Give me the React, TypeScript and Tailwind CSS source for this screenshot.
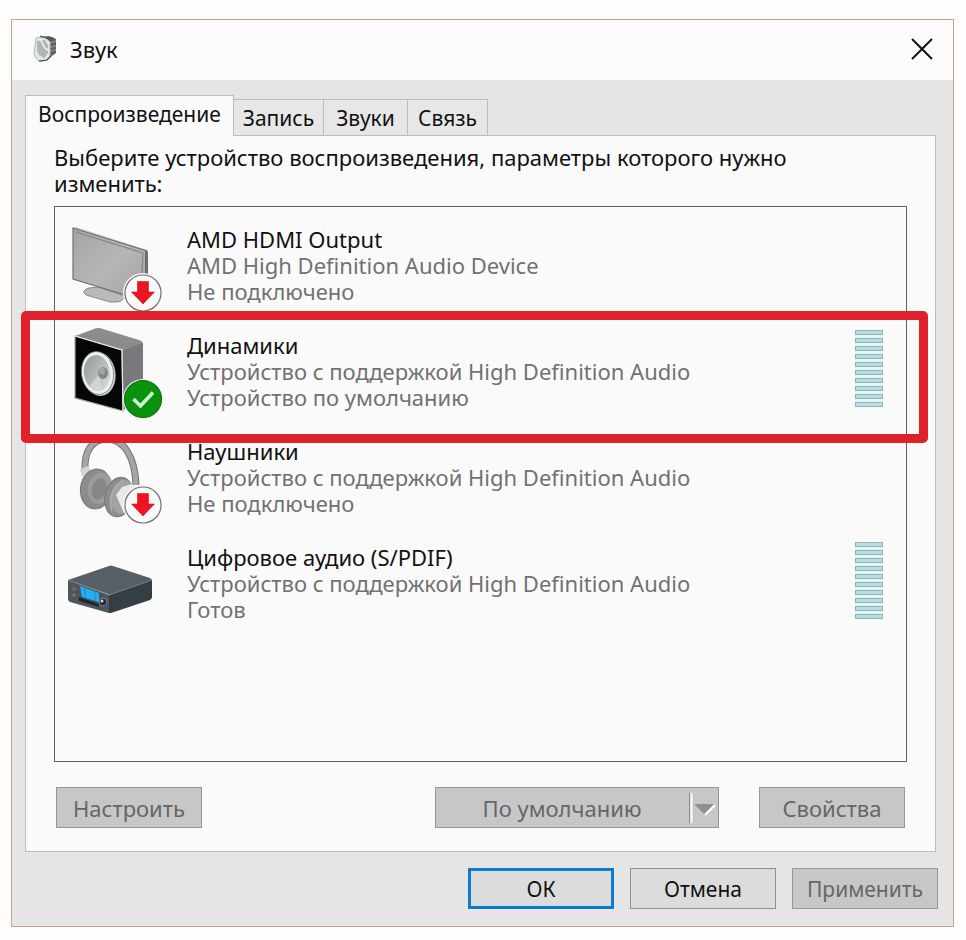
import React, { useState } from 'react';

interface Device {
  id: string;
  name: string;
  driver: string;
  status: string;
  icon: () => React.ReactElement;
  hasMeter?: boolean;
  highlighted?: boolean;
}

const tabs = [
  { label: 'Запись', width: 'w-[90px]' },
  { label: 'Звуки', width: 'w-[84px]' },
  { label: 'Связь', width: 'w-[80px]' },
];

function UnpluggedBadge() {
  return (
    <>
      <circle cx="78" cy="74" r="20" fill="#fbfafa" />
      <circle cx="78" cy="74" r="18" fill="#fbfafa" stroke="#6f6f6f" strokeWidth="1.2" />
      <path d="M72.500 62.500h11v10.500h6L78 85 66.500 73h6z" fill="#ee1420" stroke="#c9182a" strokeWidth="0.600" />
    </>
  );
}

function MonitorIcon() {
  return (
    <svg viewBox="0 0 100 92" className="h-[92px] w-[100px] shrink-0 overflow-visible" aria-hidden="true">
      <defs>
        <linearGradient id="screen" x1="0" y1="0" x2="1" y2="1">
          <stop offset="0" stopColor="#a4a4a4" />
          <stop offset="0.5" stopColor="#b6b6b6" />
          <stop offset="1" stopColor="#a3a3a3" />
        </linearGradient>
      </defs>
      <path d="M36 66l19 6v9l-17-4z" fill="#a0a0a0" />
      <path d="M19 72q1-2 5-3l9-1 27 9q-2 6-9 6h-6l-24-7q-3-2-2-4z" fill="#b9b9b9" stroke="#8a8a8a" strokeWidth="1" />
      <path d="M8 9l3-1 71 23-2 4z" fill="#c9c9c9" />
      <path d="M8 9l74 23-2 50L8 60z" fill="url(#screen)" stroke="#727272" strokeWidth="1.2" />
      <path d="M11 13l67 21-2 42" fill="none" stroke="#858585" strokeWidth="1.200" />
      <path d="M80 32l3 1v29l-3-2z" fill="#6c6c6c" />
      <UnpluggedBadge />
    </svg>
  );
}

function SpeakerIcon() {
  return (
    <svg viewBox="0 0 100 92" className="h-[92px] w-[100px] shrink-0 overflow-visible" aria-hidden="true">
      <defs>
        <linearGradient id="cone" x1="0" y1="0" x2="1" y2="1">
          <stop offset="0" stopColor="#8f9696" />
          <stop offset="0.6" stopColor="#b9c0c0" />
          <stop offset="1" stopColor="#e0e4e4" />
        </linearGradient>
      </defs>
      <path d="M10 11L29 4q4-2 9 0l36 11q4 1 4 4L57 25z" fill="#8b8c8e" />
      <path d="M57 25l21-7v46L58 86z" fill="#77797c" />
      <path d="M10 11l47 14 1 61-48-13z" fill="#060606" stroke="#a9a9a9" strokeWidth="1.2" />
      <path d="M10 11l47 14 1 61" fill="none" stroke="#e8e8e8" strokeWidth="1.2" />
      <ellipse cx="34" cy="49" rx="16.500" ry="22" fill="#c9cdcd" transform="rotate(-8 34 49)" />
      <ellipse cx="32.500" cy="48" rx="16" ry="21.500" fill="#edf0f0" stroke="#6f7373" strokeWidth="0.700" transform="rotate(-8 32.500 48)" />
      <ellipse cx="32" cy="48" rx="13" ry="18" fill="url(#cone)" transform="rotate(-8 32 48)" />
      <path d="M35 48L24 62q5 5 12 2z" fill="#d9dddd" opacity="0.700" />
      <ellipse cx="38" cy="48" rx="5" ry="6" fill="#898686" />
      <ellipse cx="37" cy="46" rx="3" ry="3.500" fill="#aaa5a5" />
      <circle cx="78" cy="74" r="20" fill="#f6faf6" />
      <circle cx="78" cy="74" r="18.500" fill="#0a920f" stroke="#08720c" strokeWidth="1.200" />
      <path d="M68.500 74l7 7L88 67.500" fill="none" stroke="#c9f7cf" strokeWidth="3.600" />
    </svg>
  );
}

function HeadphonesIcon() {
  return (
    <svg viewBox="0 0 100 92" className="h-[92px] w-[100px] shrink-0 overflow-visible" aria-hidden="true">
      <path d="M20 40C19 20 27 8 42 8c17 0 28 18 29 46" fill="none" stroke="#747474" strokeWidth="7" />
      <path d="M20 40C19 20 27 8 42 8c17 0 28 18 29 46" fill="none" stroke="#a5a5a5" strokeWidth="5" />
      <path d="M15 38l8-3 4 5-10 6z" fill="#d5d5d5" />
      <ellipse cx="31" cy="58" rx="15.500" ry="20" fill="#8c8c8c" stroke="#747474" transform="rotate(8 31 58)" />
      <ellipse cx="35" cy="57" rx="12" ry="16" fill="#9b9b9b" transform="rotate(14 35 57)" />
      <ellipse cx="34" cy="58" rx="7" ry="11" fill="#868686" transform="rotate(18 34 58)" />
      <ellipse cx="54" cy="66" rx="14" ry="20" fill="#8c8c8c" stroke="#777" transform="rotate(12 54 66)" />
      <ellipse cx="58" cy="66" rx="12" ry="17" fill="#a2a2a2" transform="rotate(12 58 66)" />
      <path d="M47 80q-6-19 11-31" fill="none" stroke="#b0b0b0" strokeWidth="1.500" />
      <path d="M51 64l6-8 10-3 4 3-12 26-5-11z" fill="#e9e9e9" />
      <UnpluggedBadge />
    </svg>
  );
}

function DigitalIcon() {
  return (
    <svg viewBox="0 0 100 92" className="h-[92px] w-[100px] shrink-0" aria-hidden="true">
      <path d="M3 43l41-14q2-1 4 0l37 12q2 1 2 3L46 58z" fill="#566066" />
      <path d="M44 58l43-15v17q0 2-2 3L46 76h-3z" fill="#343e43" />
      <path d="M3 43l41 15v18L5 65q-2-1-2-3z" fill="#4b575d" />
      <path d="M3 43l41 15 43-15" fill="none" stroke="#758087" strokeWidth="1" />
      <path d="M15 49l19 7v9l-17-5z" fill="#23aef2" />
      <path d="M20 51v10M30 54v10" stroke="#0d85c4" strokeWidth="0.800" />
      <path d="M14 60l20 7v3l-20-6z" fill="#1c282e" />
      <circle cx="9" cy="52" r="2" fill="#805f68" />
      <circle cx="9" cy="58" r="1.500" fill="#93767c" />
      <circle cx="38" cy="65" r="4" fill="#252a33" stroke="#8c9299" strokeWidth="0.800" />
      <circle cx="37" cy="64" r="1.500" fill="#c9d1dd" />
    </svg>
  );
}

function TitleIcon() {
  return (
    <svg viewBox="0 0 26 30" className="h-[30px] w-[26px]" aria-hidden="true">
      <path d="M8 3l9-1 7 3v14l-7 5-6-4z" fill="#5e6162" />
      <path d="M18 9l6-2M18 13l6-1M18 17l6-1" stroke="#8d9091" strokeWidth="1.500" />
      <path d="M4 4l9-1 5 5v14l-3 4-7 2-4-4-2-4z" fill="#e4e7e8" stroke="#b3b7b8" strokeWidth="1" />
      <path d="M5 7l8-1 3 5v8l-4 5-5-3-2-5z" fill="#b0b6b8" />
      <path d="M8 5l5 9 4 3" fill="none" stroke="#f5f6f6" strokeWidth="1.500" />
      <path d="M8 2l9 3 5-1M7 27l8-1 4-4" fill="none" stroke="#414545" strokeWidth="1.200" />
    </svg>
  );
}

const devices: Device[] = [
  {
    id: 'hdmi',
    name: 'AMD HDMI Output',
    driver: 'AMD High Definition Audio Device',
    status: 'Не подключено',
    icon: MonitorIcon,
  },
  {
    id: 'speakers',
    name: 'Динамики',
    driver: 'Устройство с поддержкой High Definition Audio',
    status: 'Устройство по умолчанию',
    icon: SpeakerIcon,
    hasMeter: true,
    highlighted: true,
  },
  {
    id: 'headphones',
    name: 'Наушники',
    driver: 'Устройство с поддержкой High Definition Audio',
    status: 'Не подключено',
    icon: HeadphonesIcon,
  },
  {
    id: 'spdif',
    name: 'Цифровое аудио (S/PDIF)',
    driver: 'Устройство с поддержкой High Definition Audio',
    status: 'Готов',
    icon: DigitalIcon,
    hasMeter: true,
  },
];

function LevelMeter() {
  return (
    <div className="mt-[5px] flex w-7 flex-col gap-[3px] bg-[#e3f6f7]">
      {Array.from({ length: 10 }, (_, i) => (
        <span key={i} className="h-[5px] border border-[#8fb5b7] bg-[#b9dde2]" />
      ))}
    </div>
  );
}

function DeviceRow({ device }: { device: Device }) {
  const Icon = device.icon;

  return (
    <li className="relative flex h-[106px] items-start pr-[23px] pl-[10px]">
      <Icon />
      <div className="ml-[22px] flex-1 pt-[7px] whitespace-nowrap text-[#717171]">
        <div className="text-[#111]">{device.name}</div>
        <div>{device.driver}</div>
        <div>{device.status}</div>
      </div>
      {device.hasMeter && <LevelMeter />}
      {device.highlighted && (
        <div className="pointer-events-none absolute -top-[14px] -right-[22px] -left-[34px] z-10 h-[132px] rounded-[5px] border-[9px] border-[#e0202b]" />
      )}
    </li>
  );
}

export default function App() {
  const [activeTab] = useState('Воспроизведение');
  const disabledButton = 'h-[41px] w-[146px] border border-[#979797] bg-[#c8c7c7] text-[#666]';

  return (
    <div className="min-h-screen bg-[#fefdfc] pt-[19px] pr-3 pb-3 pl-[11px] font-['Noto_Sans','Open_Sans',sans-serif] text-[22px] leading-[26px] text-[#111]">
      <main className="border border-[#c9a08e] bg-[#e6e5e5]">
        <header className="flex h-[60px] items-center bg-[#fcfbfb] pr-5 pb-[3px] pl-5">
          <TitleIcon />
          <h1 className="ml-3">Звук</h1>
          <button type="button" aria-label="Закрыть" className="ml-auto">
            <svg viewBox="0 0 22 22" className="size-[22px]" aria-hidden="true">
              <path d="M1 1l20 20M21 1L1 21" stroke="#111" strokeWidth="2" />
            </svg>
          </button>
        </header>

        <div className="pt-[15px] pr-[15px] pb-[17px] pl-[13px]">
          {/* Tabs */}
          <div role="tablist" className="relative flex h-[41px] items-end text-[21px]">
            <button type="button" role="tab" aria-selected="true" className="h-[41px] w-[209px] border border-b-0 border-[#bcbcbc] bg-[#fafafa] pb-1">
              {activeTab}
            </button>
            {tabs.map((tab) => (
              <button
                key={tab.label}
                type="button"
                role="tab"
                aria-selected="false"
                className={`h-[37px] border border-l-0 border-[#bcbcbc] bg-[#e8e7e7] ${tab.width}`}
              >
                {tab.label}
              </button>
            ))}
          </div>

          {/* Playback panel */}
          <section className="-mt-px mr-[2px] border border-[#bcbcbc] bg-[#fafafa] px-[28px] pt-2 pb-[23px]">
            <p className="pr-10">Выберите устройство воспроизведения, параметры которого нужно изменить:</p>
            <ul className="mt-[10px] min-h-[556px] border border-[#626262] bg-[#fbfafa] pt-3">
              {devices.map((device) => (
                <DeviceRow key={device.id} device={device} />
              ))}
            </ul>

            <div className="mt-[25px] flex items-center px-[2px]">
              <button type="button" disabled className={disabledButton}>Настроить</button>
              <div className="mr-10 ml-auto flex h-[41px] w-[284px] border border-[#979797] bg-[#c8c7c7] text-[#666]">
                <button type="button" disabled className="flex-1">По умолчанию</button>
                <button type="button" disabled aria-label="Другие варианты" className="w-[30px]">
                  <svg viewBox="0 0 30 39" className="h-[39px] w-[30px]" aria-hidden="true">
                    <path d="M1.500 5v30" stroke="#8b8b8b" />
                    <path d="M3.500 5v30" stroke="#fff" strokeWidth="2" />
                    <path d="M17 27l10-10" stroke="#fff" strokeWidth="2" />
                    <path d="M6 16h20l-10 10z" fill="#8f8f8f" />
                  </svg>
                </button>
              </div>
              <button type="button" disabled className={disabledButton}>Свойства</button>
            </div>
          </section>

          {/* Dialog actions */}
          <footer className="mt-4 flex justify-end gap-4 text-[21px]">
            <button type="button" className="h-[41px] w-[146px] border-[3px] border-[#0b7bd0] bg-[#dddcdc]">ОК</button>
            <button type="button" className="h-[41px] w-[146px] border border-[#8f8f8f] bg-[#dddcdc]">Отмена</button>
            <button type="button" disabled className={disabledButton}>Применить</button>
          </footer>
        </div>
      </main>
    </div>
  );
}
